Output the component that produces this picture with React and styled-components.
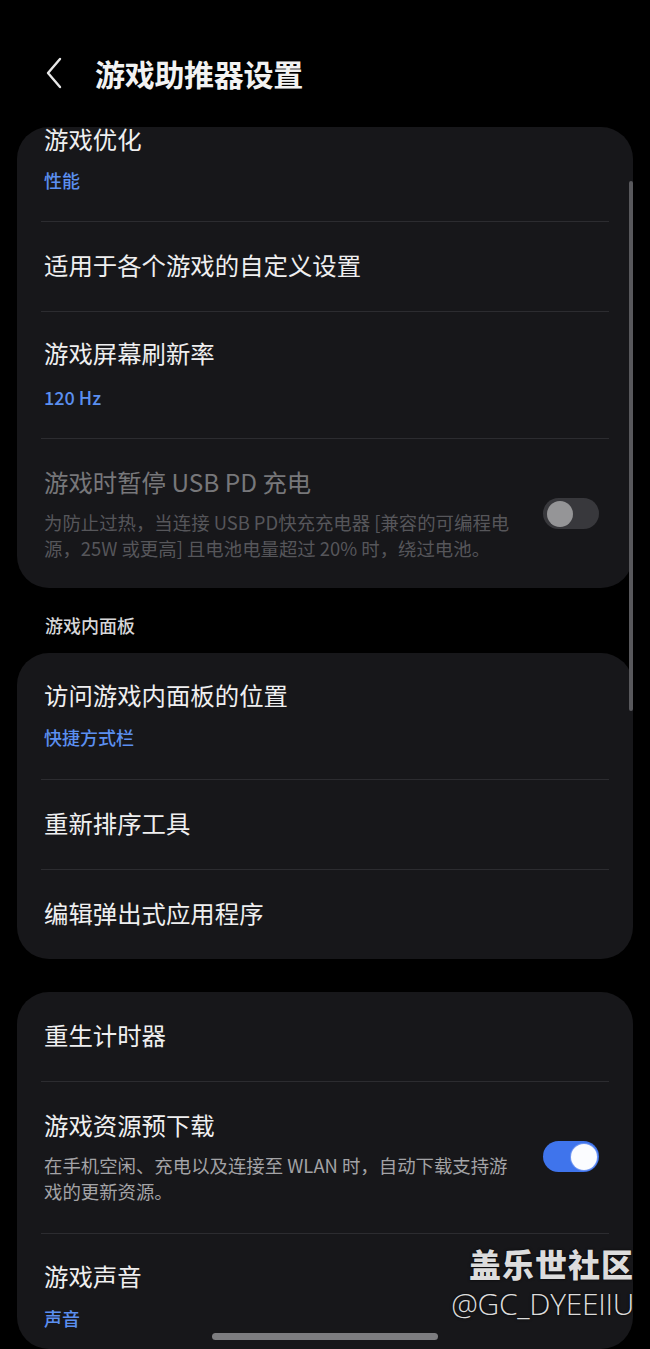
import React from "react";
import styled, { createGlobalStyle } from "styled-components";

const GlobalStyle = createGlobalStyle`
  html, body {
    margin: 0;
    padding: 0;
    background: #000;
  }
  body {
    width: 650px;
    height: 1349px;
    overflow: hidden;
    font-family: "Noto Sans CJK SC", "Noto Sans", sans-serif;
  }
`;

const Screen = styled.div`
  position: relative;
  width: 650px;
  height: 1349px;
  overflow: hidden;
  background: #000;
`;

const Header = styled.div`
  display: flex;
  align-items: center;
  height: 127px;
  padding: 18px 0 0 43px;
  box-sizing: border-box;
  gap: 30px;
`;

const BackButton = styled.div`
  width: 22px;
  height: 34px;
  display: flex;
  align-items: center;
  justify-content: center;
`;

const Title = styled.h1`
  margin: 0;
  font-size: 30px;
  line-height: 40px;
  font-weight: 700;
  color: #f2f2f2;
  letter-spacing: -0.3px;
`;

const List = styled.div`
  display: flex;
  flex-direction: column;
  padding: 0 17px;
`;

const Card = styled.div`
  background: #17171a;
  border-radius: 32px;
  margin-bottom: ${(p) => p.$gap || 0}px;
`;

const Row = styled.div`
  position: relative;
  display: flex;
  align-items: center;
  gap: 28px;
  padding: ${(p) => p.$pad || "28px 34px 30px 27px"};

  &:not(:first-child)::before {
    content: "";
    position: absolute;
    top: 0;
    left: 24px;
    right: 24px;
    height: 1px;
    background: #2c2c30;
  }
`;

const TextCol = styled.div`
  flex: 1;
  min-width: 0;
  display: flex;
  flex-direction: column;
`;

const RowTitle = styled.div`
  font-size: 24.4px;
  line-height: ${(p) => p.$lh || 32}px;
  color: ${(p) => (p.$dim ? "#77777a" : "#efeff0")};
  font-weight: 400;
  white-space: nowrap;
`;

const RowValue = styled.div`
  margin-top: ${(p) => p.$mt || 12}px;
  font-size: 18px;
  line-height: 26px;
  color: #5b8ff0;
  font-weight: 500;
`;

const RowDesc = styled.div`
  margin-top: 11px;
  font-size: 18.4px;
  line-height: 26px;
  color: ${(p) => (p.$dim ? "#56565a" : "#a3a3a6")};
`;

const SectionLabel = styled.div`
  padding: 24px 28px 15px;
  font-size: 18px;
  line-height: 26px;
  font-weight: 500;
  color: #d6d6d8;
`;

const Track = styled.div`
  flex: none;
  position: relative;
  width: 56px;
  height: 31px;
  border-radius: 16px;
  background: ${(p) => (p.$on ? "#3f74ec" : "#38383c")};
`;

const Thumb = styled.div`
  position: absolute;
  top: 2.5px;
  ${(p) => (p.$on ? "right: 2.5px;" : "left: 3.5px;")}
  width: 26px;
  height: 26px;
  border-radius: 50%;
  background: ${(p) => (p.$on ? "#fbfcff" : "#959597")};
  box-shadow: ${(p) => (p.$on ? "0 0 0 1px #6e95f2" : "none")};
`;

const ScrollBar = styled.div`
  position: absolute;
  left: 629px;
  top: 181px;
  width: 4px;
  height: 530px;
  border-radius: 2px;
  background: #58585c;
`;

const HomeBar = styled.div`
  position: absolute;
  left: 212px;
  top: 1333px;
  width: 226px;
  height: 7px;
  border-radius: 4px;
  background: #7d7d80;
`;

const Watermark = styled.div`
  position: absolute;
  right: 16px;
  top: 1240px;
  display: flex;
  flex-direction: column;
  align-items: flex-end;
  color: #dcdcdc;
  text-shadow: 0 0 3px rgba(0, 0, 0, 0.8);
`;

const MarkBig = styled.div`
  font-size: 32px;
  line-height: 46px;
  font-weight: 900;
  letter-spacing: 1px;
`;

const MarkSmall = styled.div`
  font-family: "Open Sans", "Noto Sans", sans-serif;
  font-size: 30px;
  line-height: 36px;
  font-weight: 300;
  letter-spacing: -0.3px;
`;

const Toggle = ({ on }) => (
  <Track $on={on}>
    <Thumb $on={on} />
  </Track>
);

export default function App() {
  return (
    <Screen>
      <GlobalStyle />
      <Header>
        <BackButton>
          <svg width="18" height="32" viewBox="0 0 18 32" fill="none">
            <path d="M15 2 L3 16 L15 30" stroke="#e8e8e8" strokeWidth="2.4" strokeLinecap="round" strokeLinejoin="round" />
          </svg>
        </BackButton>
        <Title>游戏助推器设置</Title>
      </Header>

      <List>
        <Card>
          <Row $pad="0 34px 28px 27px">
            <TextCol>
              <RowTitle $lh={24}>游戏优化</RowTitle>
              <RowValue $mt={16}>性能</RowValue>
            </TextCol>
          </Row>
          <Row>
            <TextCol>
              <RowTitle>适用于各个游戏的自定义设置</RowTitle>
            </TextCol>
          </Row>
          <Row $pad="26px 34px 28px 27px">
            <TextCol>
              <RowTitle>游戏屏幕刷新率</RowTitle>
              <RowValue $mt={15}>120 Hz</RowValue>
            </TextCol>
          </Row>
          <Row $pad="28px 34px 27px 27px">
            <TextCol>
              <RowTitle $dim>游戏时暂停 USB PD 充电</RowTitle>
              <RowDesc $dim>
                为防止过热，当连接 USB PD快充充电器 [兼容的可编程电源，25W 或更高] 且电池电量超过 20% 时，绕过电池。
              </RowDesc>
            </TextCol>
            <Toggle on={false} />
          </Row>
        </Card>

        <SectionLabel>游戏内面板</SectionLabel>

        <Card $gap={33}>
          <Row $pad="26px 34px 29px 27px">
            <TextCol>
              <RowTitle>访问游戏内面板的位置</RowTitle>
              <RowValue $mt={13}>快捷方式栏</RowValue>
            </TextCol>
          </Row>
          <Row>
            <TextCol>
              <RowTitle>重新排序工具</RowTitle>
            </TextCol>
          </Row>
          <Row>
            <TextCol>
              <RowTitle>编辑弹出式应用程序</RowTitle>
            </TextCol>
          </Row>
        </Card>

        <Card>
          <Row $pad="27px 34px 30px 27px">
            <TextCol>
              <RowTitle>重生计时器</RowTitle>
            </TextCol>
          </Row>
          <Row $pad="28px 34px 29px 27px">
            <TextCol>
              <RowTitle>游戏资源预下载</RowTitle>
              <RowDesc>在手机空闲、充电以及连接至 WLAN 时，自动下载支持游戏的更新资源。</RowDesc>
            </TextCol>
            <Toggle on />
          </Row>
          <Row $pad="27px 34px 18px 27px">
            <TextCol>
              <RowTitle>游戏声音</RowTitle>
              <RowValue $mt={13}>声音</RowValue>
            </TextCol>
          </Row>
        </Card>
      </List>

      <ScrollBar />
      <Watermark>
        <MarkBig>盖乐世社区</MarkBig>
        <MarkSmall>@GC_DYEEIIU</MarkSmall>
      </Watermark>
      <HomeBar />
    </Screen>
  );
}
